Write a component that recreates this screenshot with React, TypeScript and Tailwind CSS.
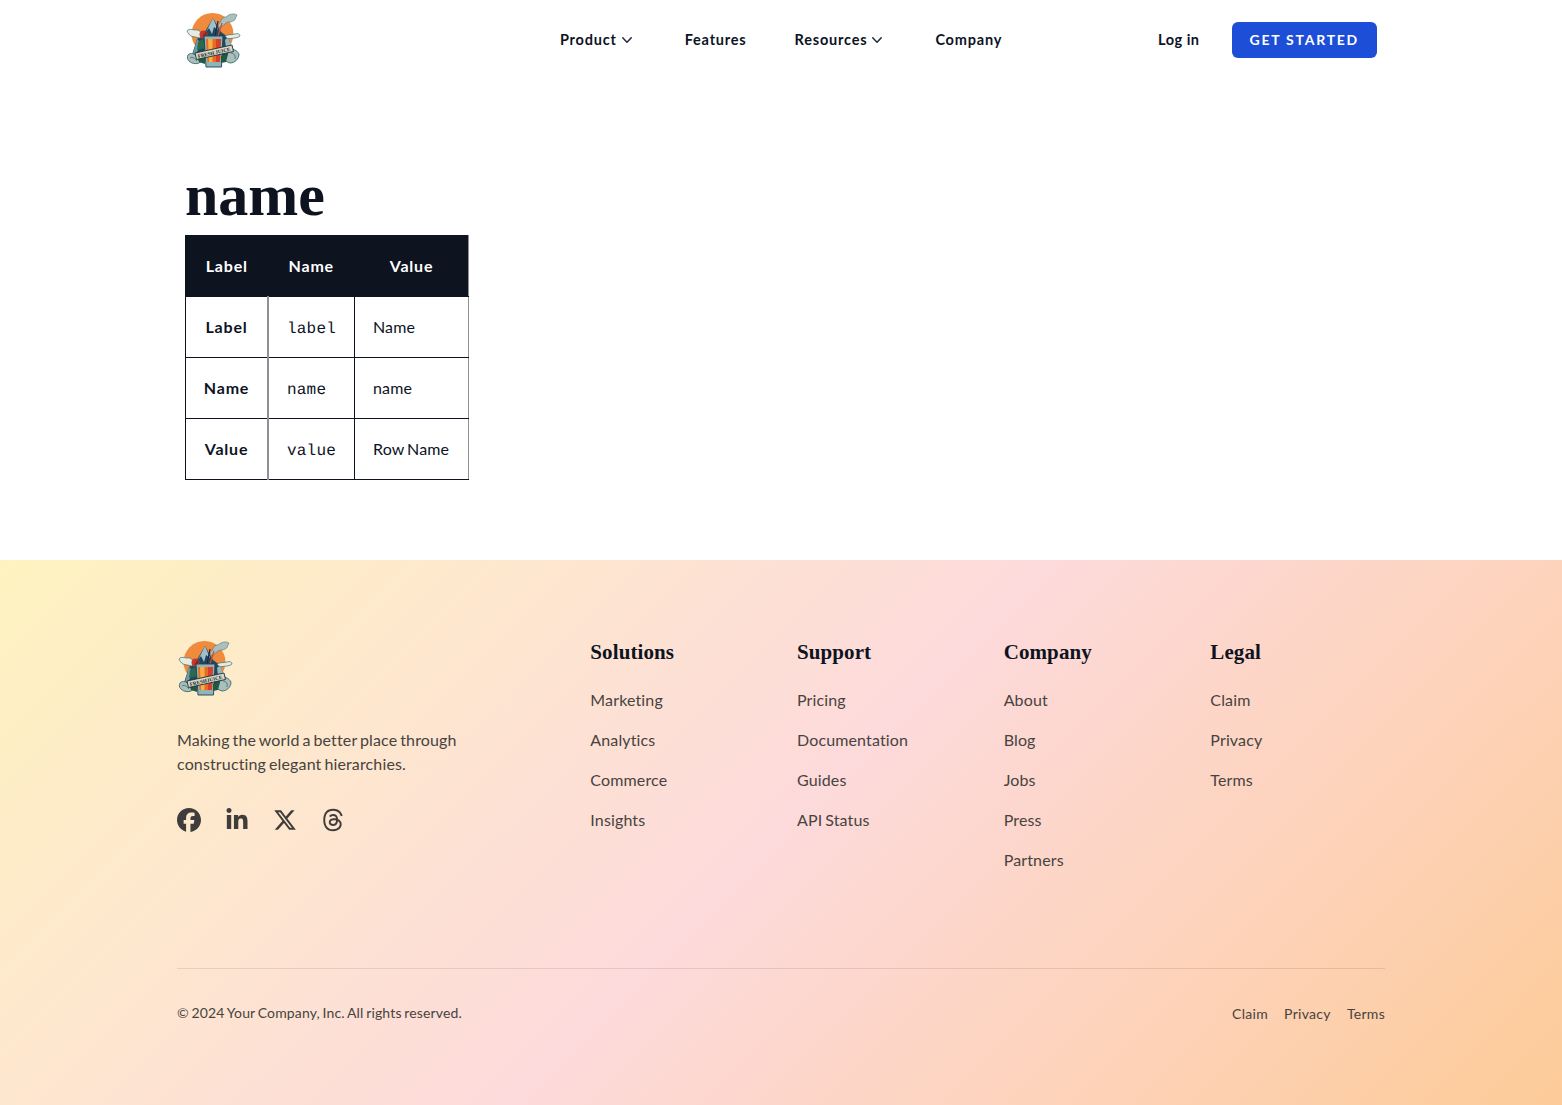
import { FaFacebook, FaLinkedinIn, FaThreads, FaXTwitter } from "react-icons/fa6";

function Logo() {
  return (
    <svg viewBox="0 0 56 56" className="w-14 h-14 shrink-0">
      {/* sun */}
      <circle cx="27.5" cy="22" r="21" fill="#f08a3c" />
      {/* smoke behind the peak */}
      <path d="M33 13 C37 9 36 5 41 5 C44 2 49 1 52 3 C50 6 51 8 48 9 C45 11 42 9 40 12 L35 16 Z" fill="#a9c0bf" stroke="#4f7479" strokeWidth="0.6" />
      {/* mountains */}
      <path d="M6 46 L12 27 L18 23 L28 6 L36 20 L43 25 L51 46 Z" fill="#1f4860" />
      <path d="M28 6 L33 18 L29 15 L27 22 L24 16 L21 20 Z" fill="#9fc0cb" />
      <path d="M12 27 L17 32 L14 36 L11 42 L8 42 Z" fill="#6f98a6" />
      <path d="M43 25 L48 38 L44 34 L41 36 L40 28 Z" fill="#97b6bd" />
      {/* clouds */}
      <path d="M2 19 C4 16 8 18 10 18 C13 17 16 20 18 23 L15 26 C12 25 8 25 6 24 C4 23 3 21 2 19 Z" fill="#e6ece4" stroke="#3f6b72" strokeWidth="0.7" />
      <path d="M40 24 C43 22 47 23 50 22 C53 21 55 22 55 24 C53 26 49 26 46 26.5 C43 27 41 26 40 24 Z" fill="#e6ece4" stroke="#3f6b72" strokeWidth="0.7" />
      {/* strawberry and straws */}
      <path d="M13 30 L18 27 L20 36 L12 38 Z" fill="#2c6a4c" />
      <circle cx="18.5" cy="22.5" r="4" fill="#c4392f" />
      <path d="M17 25 L21 19 L22 23 Z" fill="#7f2b22" />
      <path d="M30 24 L33 9" stroke="#1b2a38" strokeWidth="1.2" />
      <path d="M33 24 L37 11" stroke="#c9473a" strokeWidth="1.2" />
      {/* glass */}
      <path d="M19 24 H38 L36.5 55 H21 Z" fill="#8fb4ba" stroke="#1f4252" strokeWidth="0.9" />
      <path d="M21 27 H36 L35 50 H22.5 Z" fill="#ea6a22" />
      <path d="M23 27 H27.5 L27.5 50 H24 Z" fill="#f6b04a" />
      <path d="M31 27 H36 L35 50 H31 Z" fill="#d5402a" />
      {/* scrolls and leaves */}
      <path d="M3 43 C6 40 9 42 12 44 L17 49 C13 53 7 52 4 49 C2 47 2 45 3 43 Z" fill="#a9bfb9" stroke="#2f5b66" strokeWidth="0.8" />
      <path d="M5 46 C8 44 10 47 12 49" fill="none" stroke="#2f5b66" strokeWidth="0.7" />
      <path d="M44 38 C47 36 52 38 54 42 C54 47 50 51 45 51 L40 49 Z" fill="#a9bfb9" stroke="#2f5b66" strokeWidth="0.8" />
      <path d="M46 41 C49 41 51 44 50 47" fill="none" stroke="#2f5b66" strokeWidth="0.7" />
      <path d="M12 45 L20 46 L20 52 L14 50 Z" fill="#1f5a3e" />
      <path d="M36 44 L43 42 L41 50 L36 51 Z" fill="#1f5a3e" />
      {/* banner */}
      <path d="M10 41 L47 33 L48.5 39.5 L11.5 47.5 Z" fill="#d9d6c4" stroke="#15303b" strokeWidth="0.9" />
      <text
        x="29"
        y="42.4"
        textAnchor="middle"
        fontSize="5"
        fontWeight="700"
        fontFamily="'Liberation Serif', serif"
        fill="#14242c"
        transform="rotate(-12.5 29 40.5)"
      >
        FRESH JUICE
      </text>
    </svg>
  );
}

function Chevron() {
  return (
    <svg viewBox="0 0 20 20" fill="currentColor" className="w-5 h-5 text-[#1f2937]">
      <path
        fillRule="evenodd"
        clipRule="evenodd"
        d="M5.23 7.21a.75.75 0 011.06.02L10 11.168l3.71-3.938a.75.75 0 111.08 1.04l-4.25 4.5a.75.75 0 01-1.08 0l-4.25-4.5a.75.75 0 01.02-1.06z"
      />
    </svg>
  );
}

const columns = [
  { title: "Solutions", links: ["Marketing", "Analytics", "Commerce", "Insights"] },
  { title: "Support", links: ["Pricing", "Documentation", "Guides", "API Status"] },
  { title: "Company", links: ["About", "Blog", "Jobs", "Press", "Partners"] },
  { title: "Legal", links: ["Claim", "Privacy", "Terms"] },
];

const rows = [
  { label: "Label", name: "label", value: "Name" },
  { label: "Name", name: "name", value: "name" },
  { label: "Value", name: "value", value: "Row Name" },
];

export default function App() {
  return (
    <div className="bg-white text-[#0d131f] font-['Lato',sans-serif]">
      <header className="w-[1192px] mx-auto h-20 flex items-center justify-between">
        <div className="flex-1 flex">
          <Logo />
        </div>
        <nav className="flex items-center gap-12 text-[14.5px] font-bold tracking-[0.8px]">
          <a className="flex items-center">
            Product <Chevron />
          </a>
          <a>Features</a>
          <a className="flex items-center">
            Resources <Chevron />
          </a>
          <a>Company</a>
        </nav>
        <div className="flex-1 flex items-center justify-end gap-8">
          <a className="text-[14.5px] font-bold tracking-[0.5px]">Log in</a>
          <a className="h-9 px-[18px] flex items-center rounded-md bg-[#1d4ed8] text-white text-sm font-bold tracking-[1.75px]">
            GET STARTED
          </a>
        </div>
      </header>

      <main className="w-[1192px] mx-auto pt-20 pb-20">
        <h1 className="h-[75px] leading-[71px] text-[60px] font-bold font-['Liberation_Serif',serif] text-[#0d131f]">
          name
        </h1>
        <table className="table-fixed w-[283px] border-collapse border border-[#0d131f] text-base tracking-[0.14px] [word-spacing:-1.3px]">
          <colgroup>
            <col className="w-[82.5px]" />
            <col className="w-[86.5px]" />
            <col className="w-[114px]" />
          </colgroup>
          <thead>
            <tr className="bg-[#0d131f] text-white font-bold tracking-[0.8px]">
              <th className="py-[18px] leading-6 border border-[#0d131f]">Label</th>
              <th className="py-[18px] leading-6 border border-[#0d131f]">Name</th>
              <th className="py-[18px] leading-6 border border-[#0d131f] border-r-[#8e9095]">Value</th>
            </tr>
          </thead>
          <tbody>
            {rows.map((r) => (
              <tr key={r.label}>
                <td className="py-[18px] leading-6 border border-[#0d131f] text-center font-bold tracking-[0.8px]">
                  {r.label}
                </td>
                <td className="pl-[18px] py-[18px] leading-6 border border-[#0d131f] border-l-2 border-l-[#8e9095]">
                  <span className="leading-none tracking-[0.2px] font-['Liberation_Mono',monospace] [text-rendering:geometricPrecision]">
                    {r.name}
                  </span>
                </td>
                <td className="px-[18px] py-[18px] leading-6 border border-[#0d131f] border-r-[#8e9095]">
                  {r.value}
                </td>
              </tr>
            ))}
          </tbody>
        </table>
      </main>

      <footer className="h-[545px] bg-linear-135 from-[#fef3c0] via-[#fddadb] to-[#fdcb98] text-[#47433f] tracking-[0.14px] [word-spacing:-1.3px]">
        <div className="w-[1208px] mx-auto pt-20">
          <div className="grid grid-cols-3 gap-8 h-[328px]">
            <div>
              <Logo />
              <p className="mt-8 text-base leading-6 w-[300px]">
                Making the world a better place through constructing elegant hierarchies.
              </p>
              <div className="mt-8 flex gap-6 text-[#3f3d3b]">
                <FaFacebook className="w-6 h-6" />
                <FaLinkedinIn className="w-6 h-6" />
                <FaXTwitter className="w-6 h-6" />
                <FaThreads className="w-6 h-6" />
              </div>
            </div>
            <div className="col-span-2 grid grid-cols-4 gap-8">
              {columns.map((col) => (
                <div key={col.title}>
                  <h3 className="h-6 leading-6 text-[21px] tracking-[0.1px] [word-spacing:normal] font-bold font-['Liberation_Serif',serif] text-[#0d131f]">
                    {col.title}
                  </h3>
                  <ul className="mt-6 flex flex-col gap-4 text-base leading-6">
                    {col.links.map((l) => (
                      <li key={l}>{l}</li>
                    ))}
                  </ul>
                </div>
              ))}
            </div>
          </div>
          <div className="border-t border-[#0d131f]/10 pt-8 flex items-start justify-between text-sm leading-6">
            <p className="tracking-[0.14px] [word-spacing:-1px]">© 2024 Your Company, Inc. All rights reserved.</p>
            <div className="flex gap-4 pt-px tracking-[0.3px]">
              <a>Claim</a>
              <a>Privacy</a>
              <a>Terms</a>
            </div>
          </div>
        </div>
      </footer>
    </div>
  );
}
